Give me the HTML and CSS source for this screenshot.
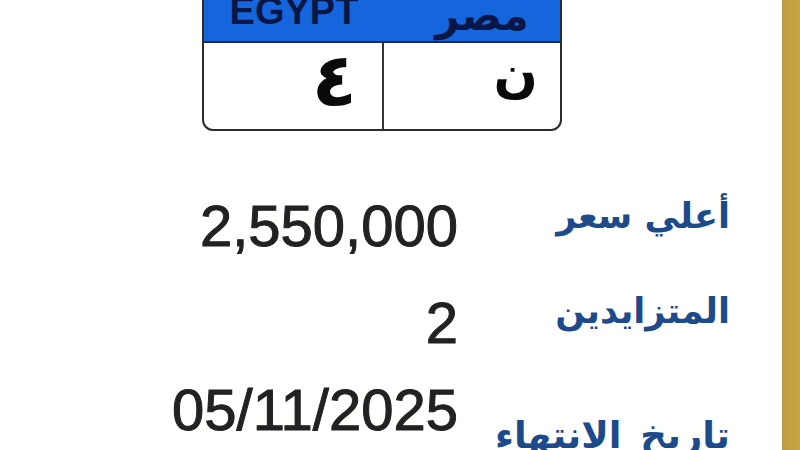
FILE: index.html
```html
<!DOCTYPE html>
<html lang="ar" dir="rtl">
<head>
<meta charset="utf-8">
<title>لوحة مصر</title>
<link rel="stylesheet" href="styles.css">
</head>
<body>
<div class="page">
  <div class="rail"></div>
  <main class="content">
    <div class="plate">
      <div class="plate-head">
        <span class="head-ar">مصر</span>
        <span class="head-en">EGYPT</span>
      </div>
      <div class="plate-body">
        <div class="cell cell-right">ن</div>
        <div class="cell cell-digit">٤</div>
      </div>
    </div>
    <div class="info">
      <div class="label">أعلي سعر</div>
      <div class="value">2,550,000</div>
      <div class="label label-mid">المتزايدين</div>
      <div class="value">2</div>
      <div class="label label-low">تاريخ الانتهاء</div>
      <div class="value">05/11/2025</div>
    </div>
  </main>
</div>
</body>
</html>
```
FILE: styles.css
```css
html, body {
  margin: 0;
  padding: 0;
  background: #ffffff;
}
body {
  width: 800px;
  height: 450px;
  overflow: hidden;
}
.page {
  display: flex;
  flex-direction: row;
  height: 450px;
  background: #fffffd;
}
.rail {
  width: 18px;
  flex: 0 0 18px;
  background: linear-gradient(to right, #b6974a 0, #b6974a 1px, #c09e3f 1px, #c6a344 100%);
}
.content {
  flex: 1;
  padding-right: 52px;
  display: flex;
  flex-direction: column;
  align-items: flex-start;
}
.plate {
  flex-shrink: 0;
  margin-top: -16px;
  margin-right: 168px;
  width: 356px;
  border: 2px solid #2b2b2b;
  border-radius: 0 0 11px 11px;
  overflow: hidden;
  background: #ffffff;
}
.plate-head {
  height: 55px;
  background: #1566dc;
  border-bottom: 2px solid #1b2a55;
  display: grid;
  grid-template-columns: 1fr 1fr;
  align-items: end;
  overflow: hidden;
  font-family: "Liberation Sans", "DejaVu Sans", sans-serif;
  font-weight: bold;
  color: #0a1646;
}
.head-en {
  font-size: 38px;
  line-height: 1;
  text-align: center;
  direction: ltr;
  padding-bottom: 11px;
  padding-left: 2px;
}
.head-ar {
  font-family: "DejaVu Sans", sans-serif;
  font-size: 42px;
  line-height: 1;
  text-align: center;
  padding-bottom: 4px;
  padding-left: 22px;
}
.plate-body {
  display: grid;
  grid-template-columns: 1fr 1fr;
  height: 86px;
}
.cell {
  font-family: "DejaVu Sans", sans-serif;
  font-weight: bold;
  font-size: 52px;
  color: #0a0a0a;
  padding-right: 22px;
  padding-top: 4px;
  line-height: 1;
}
.cell-right {
  border-left: 2px solid #333333;
}
.cell-digit {
  font-size: 74px;
  padding-right: 25px;
  padding-top: 0;
}
.info {
  flex-shrink: 0;
  margin-top: 66px;
  display: grid;
  grid-template-columns: 240px auto;
  grid-template-rows: 97px 87px auto;
  column-gap: 32px;
  align-items: start;
}
.label {
  font-family: "DejaVu Sans", sans-serif;
  font-size: 35px;
  font-weight: bold;
  line-height: 1;
  color: #1c4a8a;
  padding-top: 2px;
}
.label-mid {
  padding-top: 0;
}
.label-low {
  padding-top: 36px;
  font-size: 37px;
  word-spacing: 6px;
}
.value {
  font-family: "Liberation Sans", Arial, sans-serif;
  font-size: 58px;
  line-height: 1;
  color: #222222;
  -webkit-text-stroke: 1px #222222;
  direction: ltr;
  text-align: right;
  justify-self: start;
}
```
